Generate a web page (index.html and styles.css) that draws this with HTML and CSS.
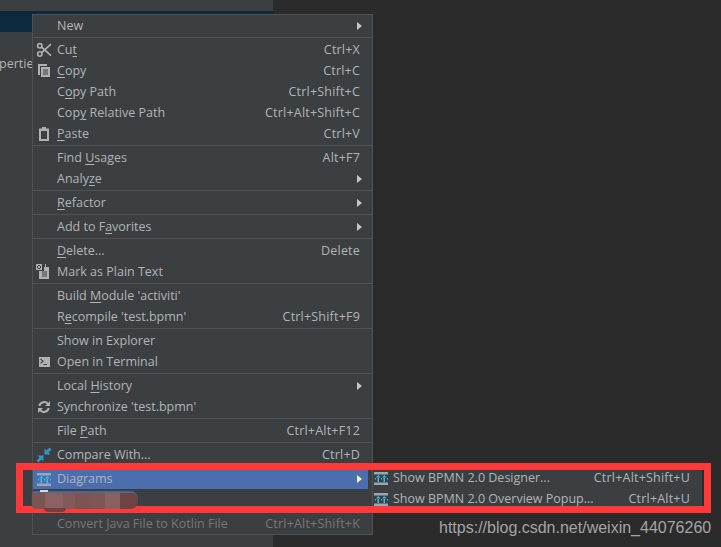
FILE: index.html
```html
<!DOCTYPE html>
<html lang="en">
<head>
<meta charset="utf-8">
<title>Context menu</title>
<link rel="stylesheet" href="styles.css">
</head>
<body>
<div class="ide">
  <aside class="project">
    <div class="project-selected"></div>
    <div class="project-label">pertie</div>
  </aside>
</div>

<div class="menu">
  <div class="row"><span class="slot"></span><span class="name">New</span><i class="arrow"></i></div>
  <hr>
  <div class="row"><span class="slot"><svg viewBox="0 0 16 16" class="ic"><g fill="none" stroke="#afb1b3" stroke-width="1.6"><circle cx="3.8" cy="3.8" r="2.2"/><circle cx="3.8" cy="12" r="2.2"/><path d="M5.600 5.200 15 13.600M5.600 10.600 15 2.200"/></g></svg></span><span class="name">Cu<u>t</u></span><span class="key">Ctrl+X</span></div>
  <div class="row"><span class="slot"><svg viewBox="0 0 16 16" class="ic"><path fill="#afb1b3" d="M2 1h9v2H4v9H2z"/><path fill="#afb1b3" d="M5 4h9v10H5z"/><path stroke="#3c3f41" stroke-width="1" d="M7 7h5M7 9h5M7 11h5"/></svg></span><span class="name"><u>C</u>opy</span><span class="key">Ctrl+C</span></div>
  <div class="row"><span class="slot"></span><span class="name">C<u>o</u>py Path</span><span class="key">Ctrl+Shift+C</span></div>
  <div class="row"><span class="slot"></span><span class="name">Cop<u>y</u> Relative Path</span><span class="key">Ctrl+Alt+Shift+C</span></div>
  <div class="row"><span class="slot"><svg viewBox="0 0 16 16" class="ic"><path fill="#afb1b3" d="M3 2.500h3V1h4v1.500h3V15H3z"/><path fill="#3c3f41" d="M5 5h6v8H5z"/></svg></span><span class="name"><u>P</u>aste</span><span class="key">Ctrl+V</span></div>
  <hr>
  <div class="row"><span class="slot"></span><span class="name">Find <u>U</u>sages</span><span class="key">Alt+F7</span></div>
  <div class="row"><span class="slot"></span><span class="name">Analy<u>z</u>e</span><i class="arrow"></i></div>
  <hr>
  <div class="row"><span class="slot"></span><span class="name"><u>R</u>efactor</span><i class="arrow"></i></div>
  <hr>
  <div class="row"><span class="slot"></span><span class="name">Add to F<u>a</u>vorites</span><i class="arrow"></i></div>
  <hr>
  <div class="row"><span class="slot"></span><span class="name"><u>D</u>elete...</span><span class="key">Delete</span></div>
  <div class="row"><span class="slot"><svg viewBox="0 0 16 16" class="ic"><path fill="#afb1b3" d="M3 3h6V0h1v3h3v12H3z"/><path fill="#3c3f41" d="M0 0h8v7H0z"/><path stroke="#afb1b3" fill="none" d="M.5.5h5v5h-5zM.5.5l5 5M5.500.5l-5 5"/><path stroke="#3c3f41" d="M6 8h5M6 10h5M6 12h5"/></svg></span><span class="name">Mark as Plain Text</span></div>
  <hr>
  <div class="row"><span class="slot"></span><span class="name">Build <u>M</u>odule 'activiti'</span></div>
  <div class="row"><span class="slot"></span><span class="name">R<u>e</u>compile 'test.bpmn'</span><span class="key">Ctrl+Shift+F9</span></div>
  <hr>
  <div class="row"><span class="slot"></span><span class="name">Show in Explorer</span></div>
  <div class="row"><span class="slot"><svg viewBox="0 0 16 16" class="ic"><path fill="#afb1b3" d="M3 3h11v10H3z"/><path fill="none" stroke="#3c3f41" stroke-width="1.100" d="m4.500 5 2.500 2.200L4.500 9.400M7.500 10.500H11"/></svg></span><span class="name">Open in Terminal</span></div>
  <hr>
  <div class="row"><span class="slot"></span><span class="name">Local <u>H</u>istory</span><i class="arrow"></i></div>
  <div class="row"><span class="slot"><svg viewBox="0 0 16 16" class="ic"><g fill="none" stroke="#afb1b3" stroke-width="2"><path d="M3.300 7a5 5 0 0 1 8.700-2.200"/><path d="M12.700 9A5 5 0 0 1 4 11.200"/></g><path fill="#afb1b3" d="M14 2v5H9zM2 14V9h5z"/></svg></span><span class="name">Synchronize 'test.bpmn'</span></div>
  <hr>
  <div class="row"><span class="slot"></span><span class="name">File <u>P</u>ath</span><span class="key">Ctrl+Alt+F12</span></div>
  <hr>
  <div class="row"><span class="slot"><svg viewBox="0 0 16 16" class="ic"><path fill="#3592c4" d="M8.500 7.500v-6l2 2L13.500.5l2 2-3 3 2 2zM7.500 8.500v6l-2-2-3 3-2-2 3-3-2-2z"/></svg></span><span class="name">Compare With...</span><span class="key">Ctrl+D</span></div>
  <hr>
  <div class="row row-active"><span class="slot"><svg viewBox="0 0 16 16" class="ic"><use href="#diagram"/></svg></span><span class="name">Diagrams</span><i class="arrow arrow-active"></i></div>
  <div class="row"></div>
  <hr>
  <div class="row row-disabled"><span class="slot"></span><span class="name">Convert Java File to Kotlin File</span><span class="key">Ctrl+Alt+Shift+K</span></div>
</div>

<div class="submenu">
  <div class="row sub-row"><span class="slot sub-slot"><svg viewBox="0 0 16 16" class="ic"><use href="#diagram"/></svg></span><span class="name">Show BPMN 2.0 Designer...</span><span class="key">Ctrl+Alt+Shift+U</span></div>
  <div class="row sub-row"><span class="slot sub-slot"><svg viewBox="0 0 16 16" class="ic"><use href="#diagram"/></svg></span><span class="name">Show BPMN 2.0 Overview Popup...</span><span class="key">Ctrl+Alt+U</span></div>
</div>

<div class="callout"></div>
<div class="redact"></div>
<div class="watermark">https://blog.csdn.net/weixin_44076260</div>

<svg class="defs" width="0" height="0" aria-hidden="true">
  <symbol id="diagram" viewBox="0 0 16 16">
    <path fill="#9aa7b0" d="M1 2h14v2.500H1zM1 12.500h14V15H1z"/>
    <path fill="#35c0ee" d="M4.500 7h1.500v5H4.500zM10.500 7H12v5h-1.500zM3 7.500h4.500L5.250 5zM9 7.500h4.500L11.250 5zM8 8h1v1.500H8zM2 8h1v1.500H2zM14 8h1v1.500h-1z"/>
  </symbol>
</svg>
</body>
</html>
```

FILE: styles.css
```css
* { box-sizing: border-box; }
html, body { margin: 0; height: 100%; }
body {
  background: #2b2b2b;
  font-family: "Open Sans", "Noto Sans", sans-serif;
  font-size: 12.5px;
  color: #b1b5b8;
  overflow: hidden;
}
.ide { display: flex; height: 547px; }
.project {
  width: 273px;
  background: #3c3f41;
  padding-top: 11px;
}
.project-selected { height: 21px; background: #0d293e; }
.project-label {
  margin-top: 21px;
  margin-left: -1px;
  line-height: 21px;
  white-space: nowrap;
}

.menu {
  position: absolute;
  left: 32px;
  top: 14px;
  width: 341px;
  height: 521px;
  background: #3c3f41;
  border: 1px solid #515151;
}
.menu hr {
  margin: 1px 0;
  border: 0;
  height: 1px;
  background: #515151;
}
.row {
  display: flex;
  align-items: center;
  height: 21px;
  padding-right: 12px;
  white-space: nowrap;
}
.slot {
  display: flex;
  width: 24px;
  padding-left: 3px;
  flex: none;
}
.ic { width: 16px; height: 16px; display: block; }
.key { margin-left: auto; letter-spacing: .2px; }
u { text-underline-offset: 2px; text-decoration-thickness: 1px; }
.arrow {
  margin-left: auto;
  margin-right: -2px;
  width: 0;
  height: 0;
  border-left: 5px solid #c4c6c8;
  border-top: 4px solid transparent;
  border-bottom: 4px solid transparent;
}
.row-active {
  background: #4b6eaf;
  margin-right: 4px;
  padding-right: 8px;
}
.arrow-active { border-left-color: #f2f2b0; }
.row-disabled { color: #777777; }

.redact {
  position: absolute;
  left: 32px;
  top: 493px;
  width: 106px;
  height: 16px;
  background: linear-gradient(90deg,
    #7b5454 0 13px, #8a6262 13px 31px, #835a5a 31px 43px, #7d5353 43px 58px,
    #7f5656 58px 73px, #8b6060 73px 88px, #6f4343 88px 100%);
  border-radius: 2px 8px 8px 4px;
  box-shadow: 0 -2px 1px #4f6894;
  filter: blur(.6px);
}
.redact::before {
  content: "";
  position: absolute;
  left: 8px;
  top: -3px;
  width: 8px;
  height: 2px;
  background: #d8d8d8;
}
.redact::after {
  content: "";
  position: absolute;
  left: 12px;
  top: 15px;
  width: 22px;
  height: 4px;
  background: #7a3d3d;
  border-radius: 0 0 4px 4px;
}

.submenu {
  position: absolute;
  left: 372px;
  top: 467px;
  width: 331px;
  height: 43px;
  background: #3c3f41;
  border-left: 1px solid #515151;
  border-right: 1px solid #2b2b2b;
}
.sub-row { padding-right: 12px; }
.sub-slot { width: 20px; padding-left: 0; }

.callout {
  position: absolute;
  left: 16px;
  top: 463px;
  width: 695px;
  height: 50px;
  border: 7px solid #ff3838;
}
.watermark {
  position: absolute;
  left: 439px;
  top: 519px;
  font-family: "Liberation Sans", sans-serif;
  font-size: 16px;
  line-height: 18px;
  color: #a5a5a5;
  white-space: nowrap;
}
.defs { position: absolute; }
```
